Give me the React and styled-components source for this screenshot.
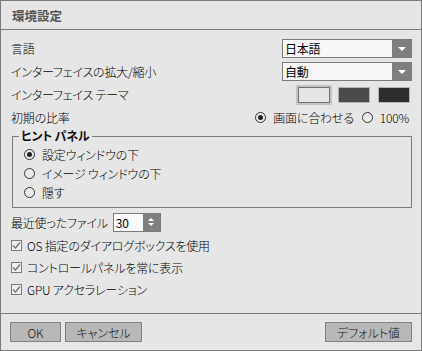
import styled, { createGlobalStyle } from "styled-components";

const GlobalStyle = createGlobalStyle`
  html, body {
    margin: 0;
    padding: 0;
    background: #e6e6e6;
  }
  * {
    box-sizing: border-box;
  }
`;

const Window = styled.div`
  width: 422px;
  height: 351px;
  display: flex;
  flex-direction: column;
  background: #e6e6e6;
  border: 1px solid #7b7b7b;
  font-family: "Noto Sans CJK JP", "Noto Sans", sans-serif;
  font-feature-settings: "palt";
  font-size: 12px;
  font-weight: 300;
  letter-spacing: -0.2px;
  color: #000;
`;

const TitleBar = styled.div`
  height: 29px;
  flex: none;
  display: flex;
  align-items: center;
  padding-left: 11px;
  border-bottom: 1px solid #7b7b7b;
  font-weight: bold;
  font-size: 12.5px;
  letter-spacing: 0;
  color: #555;
`;

const Body = styled.div`
  flex: 1;
  display: flex;
  flex-direction: column;
  padding: 7px 9px 0 10px;
`;

const Row = styled.div`
  height: ${(p) => p.h || 23}px;
  margin-top: ${(p) => p.mt || 0}px;
  display: flex;
  align-items: center;
  gap: ${(p) => p.gap || 0}px;
  justify-content: ${(p) => (p.start ? "flex-start" : "space-between")};
`;

const Label = styled.span`
  white-space: nowrap;
  flex: none;
`;

const Select = styled.div`
  width: 130px;
  height: 19px;
  display: flex;
  border: 1px solid #7b7b7b;
  background: #f7f7f7;
`;

const SelectText = styled.span`
  flex: 1;
  padding-left: 2px;
  line-height: 17px;
  font-weight: 400;
`;

const SelectArrow = styled.span`
  width: 19px;
  background: #7f7f7f;
  display: flex;
  align-items: center;
  justify-content: center;
  &::after {
    content: "";
    border-left: 4px solid transparent;
    border-right: 4px solid transparent;
    border-top: 4px solid #fff;
  }
`;

const Swatches = styled.div`
  display: flex;
  gap: 8px;
  padding-right: 2px;
`;

const Swatch = styled.div`
  width: 32px;
  height: 16px;
  background: ${(p) => p.color};
  border: 1px solid ${(p) => (p.selected ? "#6f6f6f" : "#b4b4b4")};
  box-shadow: ${(p) => (p.selected ? "0 0 0 2px #c4c4c4" : "none")};
`;

const RadioGroup = styled.div`
  display: flex;
  align-items: center;
  gap: 8px;
  padding-right: 3px;
`;

const RadioItem = styled.label`
  display: flex;
  align-items: center;
  gap: 7px;
  white-space: nowrap;
`;

const RadioDot = styled.span`
  width: 11px;
  height: 11px;
  border-radius: 50%;
  border: 1px solid #333;
  background: #e9e9e9;
  display: flex;
  align-items: center;
  justify-content: center;
  &::after {
    content: "";
    width: 5px;
    height: 5px;
    border-radius: 50%;
    background: ${(p) => (p.checked ? "#222" : "transparent")};
  }
`;

const Group = styled.fieldset`
  margin: 0 0 0 1px;
  padding: 2px 0 5px 0;
  border: 1px solid #7b7b7b;
  min-width: 0;
`;

const Legend = styled.legend`
  margin-left: 6px;
  padding: 0 2px;
  font-weight: bold;
  line-height: 14px;
  color: #111;
`;

const GroupRow = styled.div`
  height: 19px;
  display: flex;
  align-items: center;
  padding-left: 11px;
`;

const Spinner = styled.div`
  width: 48px;
  height: 19px;
  display: flex;
  border: 1px solid #7b7b7b;
  background: #fafafa;
`;

const SpinnerText = styled.span`
  flex: 1;
  padding-left: 2px;
  line-height: 17px;
  font-weight: 400;
`;

const SpinnerButtons = styled.span`
  width: 17px;
  background: #7f7f7f;
  display: flex;
  flex-direction: column;
  align-items: center;
  justify-content: center;
  gap: 2px;
`;

const Tri = styled.span`
  border-left: 3px solid transparent;
  border-right: 3px solid transparent;
  border-${(p) => (p.up ? "bottom" : "top")}: 3px solid #fff;
`;

const CheckList = styled.div`
  margin-top: 2px;
  display: flex;
  flex-direction: column;
`;

const CheckRow = styled.div`
  height: 22px;
  display: flex;
  align-items: center;
  gap: 5px;
`;

const CheckBox = styled.span`
  width: 11px;
  height: 11px;
  border: 1px solid #7a7a7a;
  background: #efefef;
  display: flex;
  align-items: center;
  justify-content: center;
`;

const Footer = styled.div`
  height: 37px;
  flex: none;
  border-top: 1px solid #7b7b7b;
  display: flex;
  align-items: flex-start;
  padding: 8px 9px 0 9px;
  gap: 4px;
`;

const Button = styled.button`
  height: 20px;
  width: ${(p) => p.w}px;
  margin-left: ${(p) => (p.push ? "auto" : "0")};
  background: #b8b8b8;
  border: 1px solid #808080;
  font-family: inherit;
  font-feature-settings: "palt";
  font-size: 12px;
  font-weight: 300;
  color: #111;
  padding: 0;
  line-height: 17px;
`;

function Check() {
  return (
    <CheckBox>
      <svg width="9" height="9" viewBox="0 0 9 9">
        <path d="M1 4.5 L3.5 7 L8 1.5" fill="none" stroke="#6e6e6e" strokeWidth="1.2" />
      </svg>
    </CheckBox>
  );
}

export default function App() {
  return (
    <Window>
      <GlobalStyle />
      <TitleBar>環境設定</TitleBar>
      <Body>
        <Row>
          <Label>言語</Label>
          <Select>
            <SelectText>日本語</SelectText>
            <SelectArrow />
          </Select>
        </Row>
        <Row>
          <Label>インターフェイスの拡大/縮小</Label>
          <Select>
            <SelectText>自動</SelectText>
            <SelectArrow />
          </Select>
        </Row>
        <Row>
          <Label>インターフェイス テーマ</Label>
          <Swatches>
            <Swatch color="#e6e6e6" selected />
            <Swatch color="#4b4b4b" />
            <Swatch color="#2e2e2e" />
          </Swatches>
        </Row>
        <Row>
          <Label>初期の比率</Label>
          <RadioGroup>
            <RadioItem>
              <RadioDot checked />
              画面に合わせる
            </RadioItem>
            <RadioItem>
              <RadioDot />
              100%
            </RadioItem>
          </RadioGroup>
        </Row>
        <Group>
          <Legend>ヒント パネル</Legend>
          <GroupRow>
            <RadioItem>
              <RadioDot checked />
              設定ウィンドウの下
            </RadioItem>
          </GroupRow>
          <GroupRow>
            <RadioItem>
              <RadioDot />
              イメージ ウィンドウの下
            </RadioItem>
          </GroupRow>
          <GroupRow>
            <RadioItem>
              <RadioDot />
              隠す
            </RadioItem>
          </GroupRow>
        </Group>
        <Row h={20} mt={4} gap={5} start>
          <Label>最近使ったファイル</Label>
          <Spinner>
            <SpinnerText>30</SpinnerText>
            <SpinnerButtons>
              <Tri up />
              <Tri />
            </SpinnerButtons>
          </Spinner>
        </Row>
        <CheckList>
          <CheckRow>
            <Check />
            <Label>OS 指定のダイアログボックスを使用</Label>
          </CheckRow>
          <CheckRow>
            <Check />
            <Label>コントロールパネルを常に表示</Label>
          </CheckRow>
          <CheckRow>
            <Check />
            <Label>GPU アクセラレーション</Label>
          </CheckRow>
        </CheckList>
      </Body>
      <Footer>
        <Button w={51}>OK</Button>
        <Button w={77}>キャンセル</Button>
        <Button w={87} push>
          デフォルト値
        </Button>
      </Footer>
    </Window>
  );
}
